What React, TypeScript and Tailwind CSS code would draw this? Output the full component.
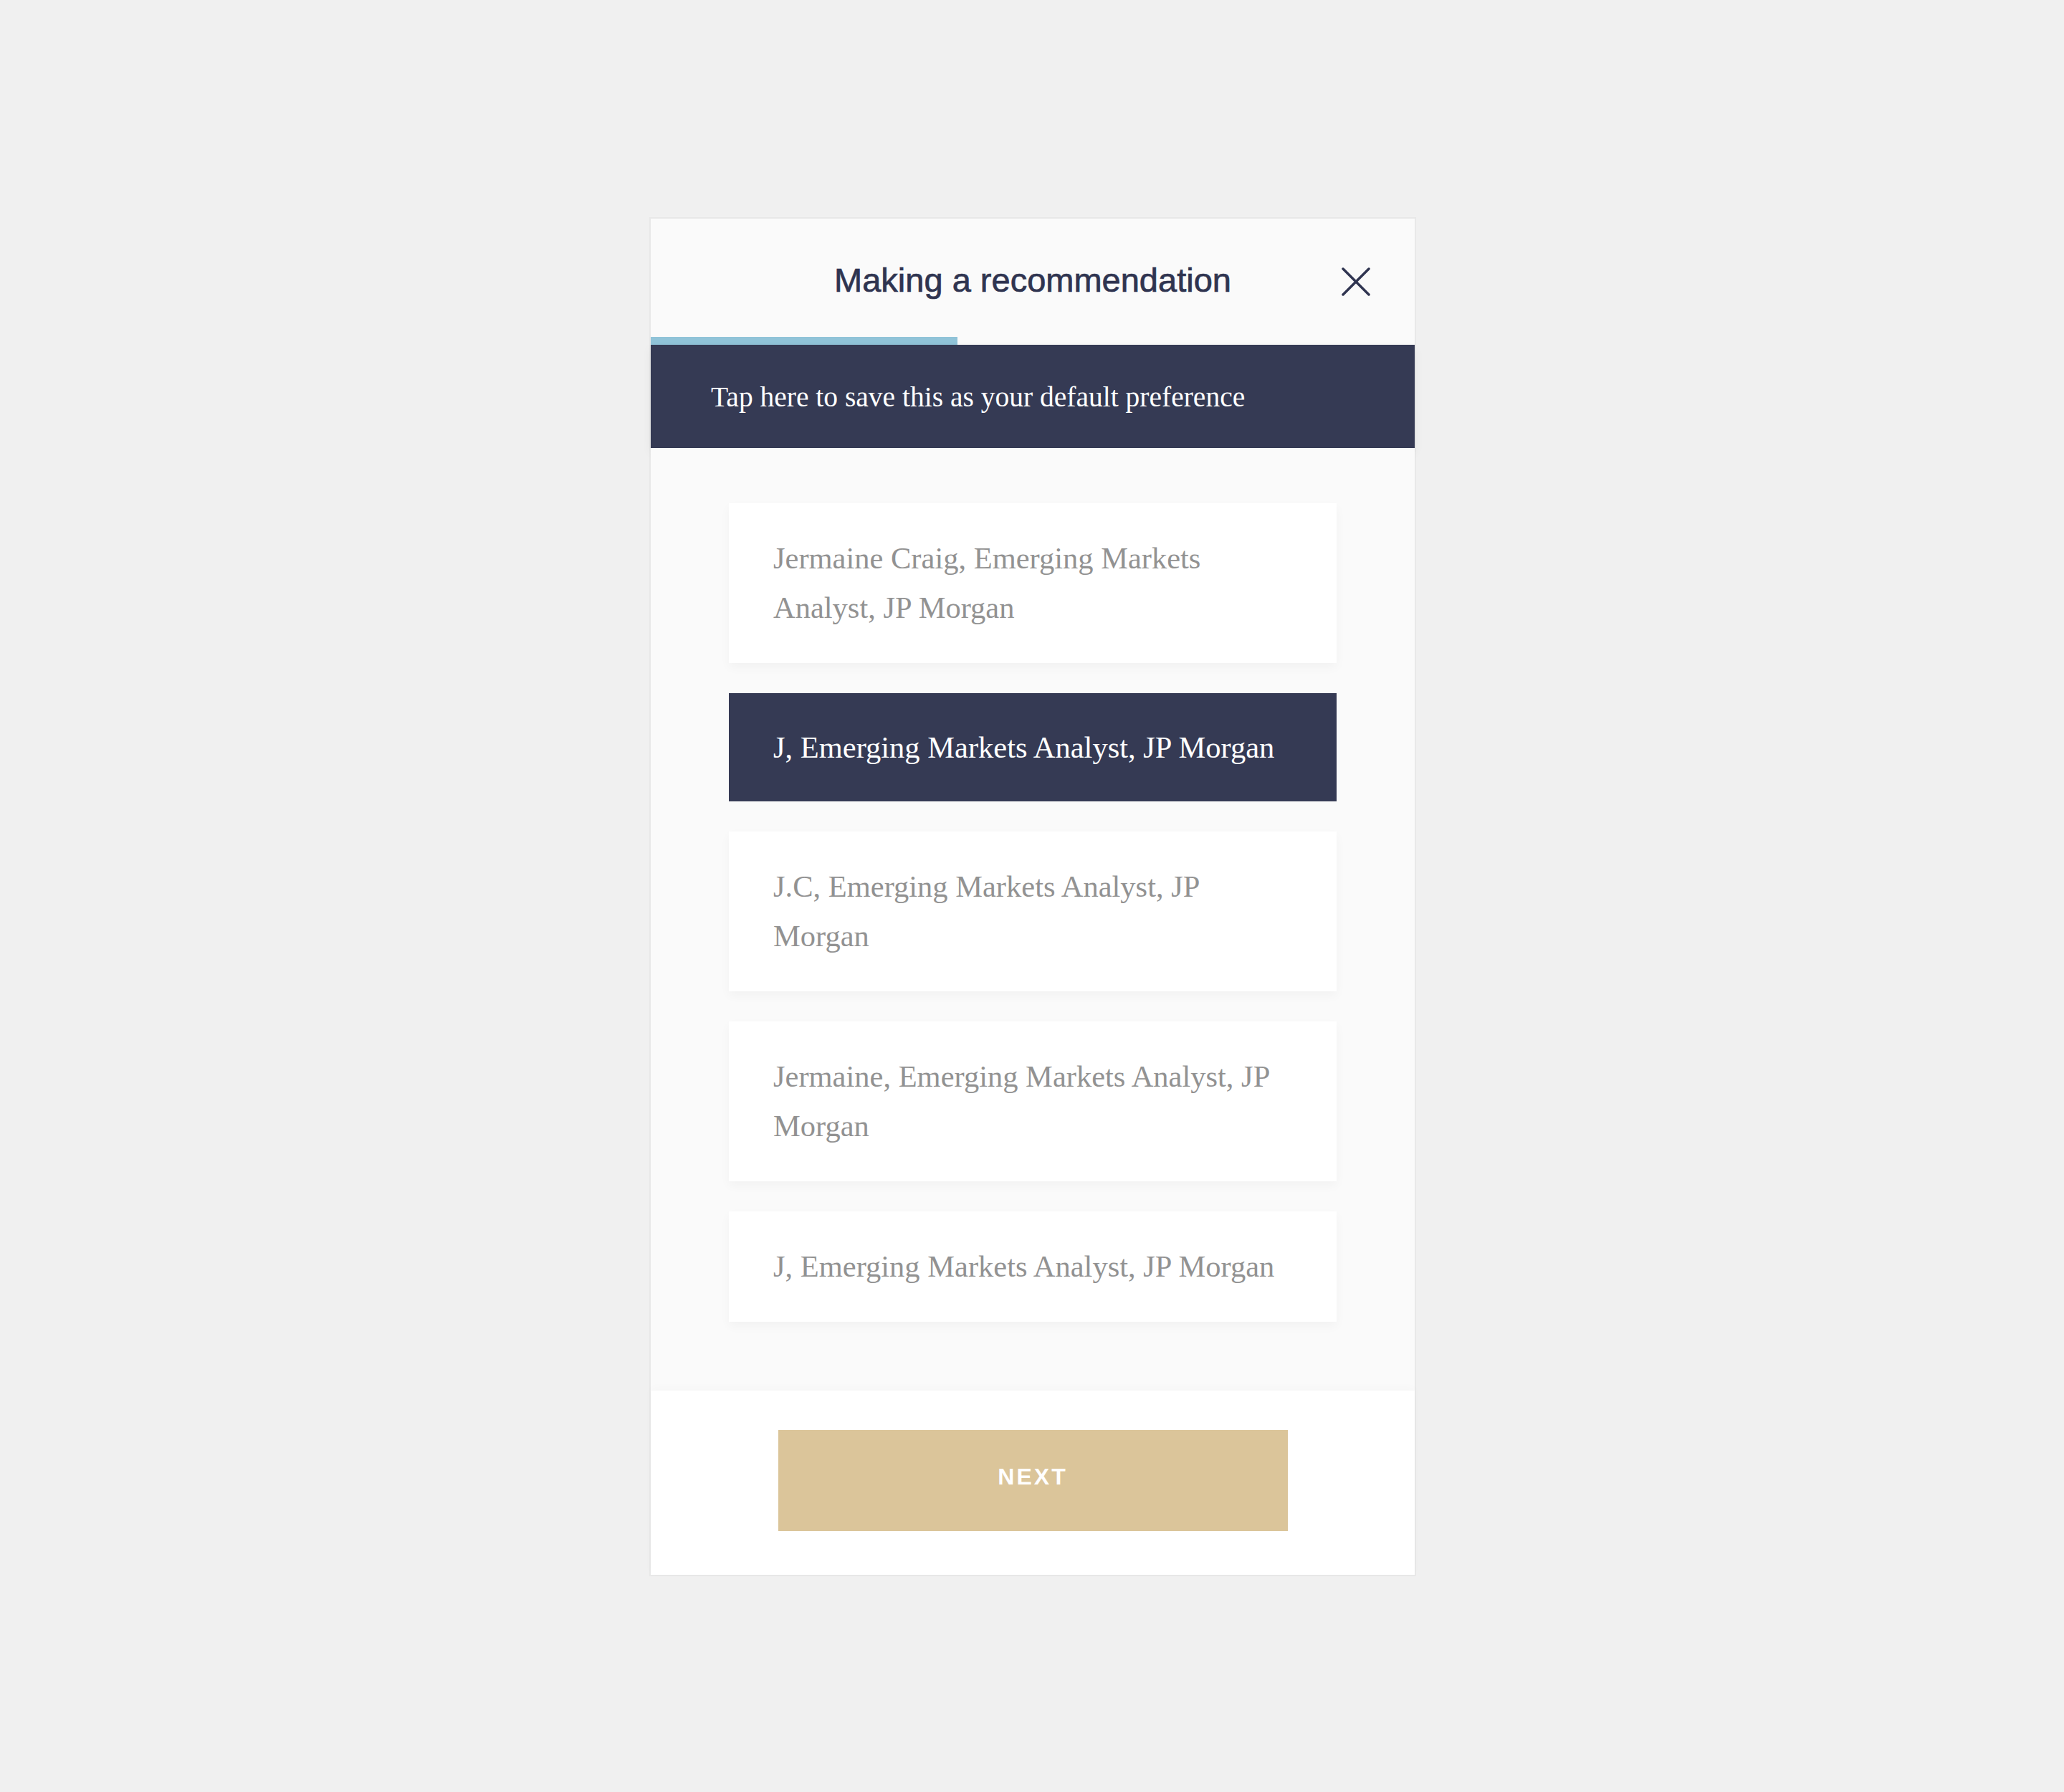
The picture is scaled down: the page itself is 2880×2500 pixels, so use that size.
const options = [
  { label: "Jermaine Craig, Emerging Markets Analyst, JP Morgan", selected: false },
  { label: "J, Emerging Markets Analyst, JP Morgan", selected: true },
  { label: "J.C, Emerging Markets Analyst, JP Morgan", selected: false },
  { label: "Jermaine, Emerging Markets Analyst, JP Morgan", selected: false },
  { label: "J, Emerging Markets Analyst, JP Morgan", selected: false },
];

function CloseIcon() {
  return (
    <svg width="40" height="40" viewBox="0 0 40 40" fill="none" stroke="#2f3450" strokeWidth="3.5" strokeLinecap="round">
      <path d="M2 2 L38 38" />
      <path d="M38 2 L2 38" />
    </svg>
  );
}

export default function App() {
  return (
    <div className="min-h-[2500px] bg-[#f0f0f0] pt-[303px]">
      <div className="mx-auto flex w-[1070px] translate-x-[1px] flex-col border-2 border-[#e8e8e8] bg-white">
        <header className="flex flex-col bg-[#fafafa]">
          <div className="relative flex h-[165px] items-center justify-center pt-[8px]">
            <h1 className="font-['Liberation_Sans',Arial,sans-serif] text-[47px] text-[#2f3450] [-webkit-text-stroke:0.7px_#2f3450]">
              Making a recommendation
            </h1>
            <button className="absolute right-[62px] top-[68px]" aria-label="Close">
              <CloseIcon />
            </button>
          </div>
          <div className="h-[11px] w-[428px] bg-[#90c3d8]" />
        </header>

        <div className="flex h-[144px] items-center bg-[#353a54] pl-[84px] pt-[4px] shadow-[0_6px_14px_rgba(0,0,0,0.05)]">
          <p className="font-['Liberation_Serif','Times_New_Roman',serif] text-[39.5px] text-white">
            Tap here to save this as your default preference
          </p>
        </div>

        <div className="flex flex-col gap-[42px] bg-[#fafafa] px-[109px] pb-[96px] pt-[77px]">
          {options.map((option, i) => (
            <button
              key={i}
              className={
                option.selected
                  ? "bg-[#353a54] px-[62px] py-[41px] text-left font-['Liberation_Serif','Times_New_Roman',serif] text-[42.5px] leading-[69px] text-white"
                  : "bg-white px-[62px] pb-[43px] pt-[42px] text-left font-['Liberation_Serif','Times_New_Roman',serif] text-[42.5px] leading-[69px] text-[#929292] shadow-[0_6px_14px_rgba(0,0,0,0.035)]"
              }
            >
              {option.label}
            </button>
          ))}
        </div>

        <footer className="flex justify-center bg-white pb-[61px] pt-[55px] shadow-[0_-4px_12px_rgba(0,0,0,0.02)]">
          <button className="flex h-[141px] w-[711px] items-center justify-center bg-[#dbc59a] pb-[12px] font-['Liberation_Sans',Arial,sans-serif] text-[32px] font-bold tracking-[3px] text-white">
            NEXT
          </button>
        </footer>
      </div>
    </div>
  );
}
